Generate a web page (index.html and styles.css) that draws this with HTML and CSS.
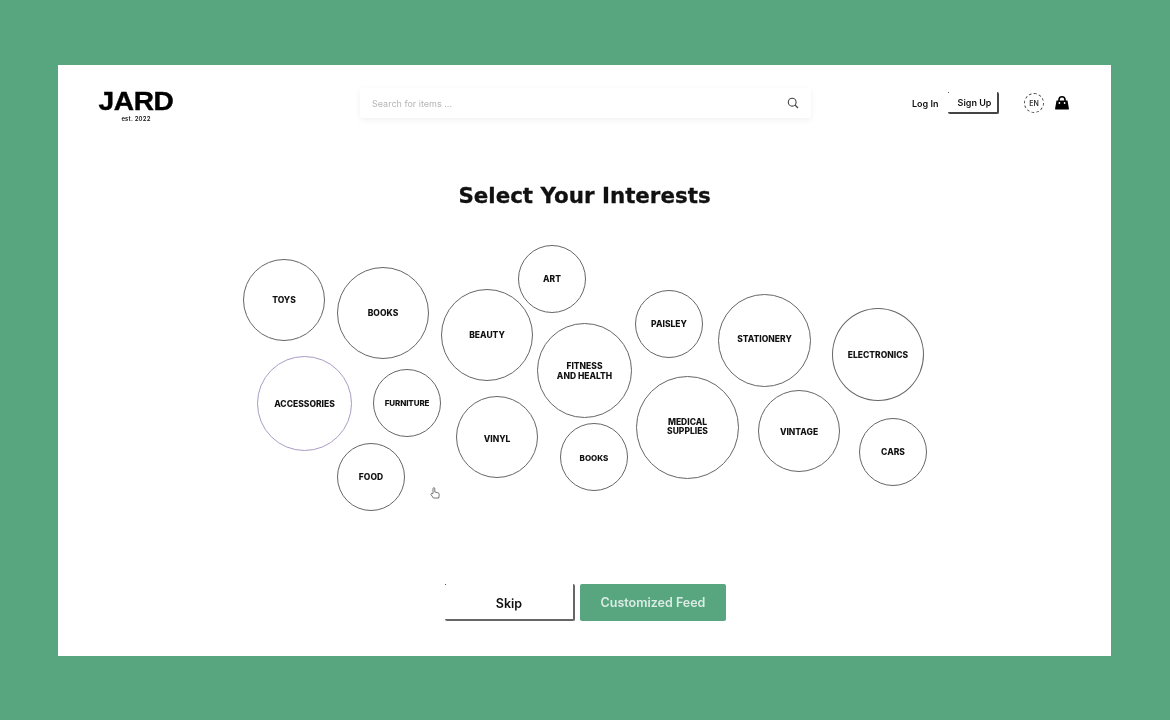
FILE: index.html
```html
<!DOCTYPE html>
<html lang="en">
<head>
<meta charset="utf-8">
<title>JARD - Select Your Interests</title>
<link rel="stylesheet" href="styles.css">
</head>
<body>
<main class="card">
  <header class="header">
    <div class="logo">
      <div class="logo-name">JARD</div>
      <div class="logo-est">est. 2022</div>
    </div>
    <div class="search">
      <span class="search-text">Search for items ...</span>
      <svg class="search-icon" viewBox="0 0 12 12" width="12" height="12"><circle cx="5.2" cy="5.2" r="3.9" fill="none" stroke="#444" stroke-width="1.1"/><path d="M8 8l3 3" stroke="#444" stroke-width="1.2" fill="none"/></svg>
    </div>
    <nav class="actions">
      <a class="login">Log In</a>
      <a class="signup">Sign Up</a>
      <span class="globe"><span class="globe-text">EN</span></span>
      <svg class="bag" viewBox="0 0 14 14" width="14" height="14"><path d="M4 6V3.8a3 3 0 0 1 6 0V6" fill="none" stroke="#000" stroke-width="1.6"/><path d="M1.5 4.6h11l1.3 7.4a1.2 1.2 0 0 1-1.2 1.6H1.4A1.2 1.2 0 0 1 .2 12z" fill="#000"/><circle cx="4.4" cy="7" r=".9" fill="#fff"/><circle cx="9.6" cy="7" r=".9" fill="#fff"/></svg>
    </nav>
  </header>

  <h1 class="title">Select Your Interests</h1>

  <section class="stage">
    <div class="bubble toys">TOYS</div>
    <div class="bubble books-a">BOOKS</div>
    <div class="bubble art">ART</div>
    <div class="bubble beauty">BEAUTY</div>
    <div class="bubble paisley">PAISLEY</div>
    <div class="bubble stationery">STATIONERY</div>
    <div class="bubble electronics">ELECTRONICS</div>
    <div class="bubble fitness">FITNESS<br>AND HEALTH</div>
    <div class="bubble accessories">ACCESSORIES</div>
    <div class="bubble furniture">FURNITURE</div>
    <div class="bubble vinyl">VINYL</div>
    <div class="bubble books-b">BOOKS</div>
    <div class="bubble medical">MEDICAL<br>SUPPLIES</div>
    <div class="bubble vintage">VINTAGE</div>
    <div class="bubble cars">CARS</div>
    <div class="bubble food">FOOD</div>
    <svg class="cursor" viewBox="0 0 10 12" width="10" height="12"><path d="M3 6.5V1.6a.9.9 0 0 1 1.8 0V5l3.4.9c.8.2 1.1.8 1 1.5L8.8 11H3.4L1 7.6c-.5-.8.5-1.6 1.2-1z" fill="#fff" stroke="#555" stroke-width=".8"/></svg>
  </section>

  <footer class="footer">
    <button class="btn btn-skip">Skip</button>
    <button class="btn btn-feed">Customized Feed</button>
  </footer>
</main>
</body>
</html>
```

FILE: styles.css
```css
* { box-sizing: border-box; }
html, body { margin: 0; height: 720px; overflow: hidden; }
body {
  background: #57a680;
  padding: 65px 59px 64px 58px;
  font-family: Inter, "Liberation Sans", sans-serif;
  color: #111;
}
.card {
  background: #fff;
  height: 591px;
  display: flex;
  flex-direction: column;
  filter: blur(0.6px);
}
.header {
  display: flex;
  align-items: flex-start;
  padding: 23px 42px 0 40px;
  height: 100px;
}
.logo { width: 76px; text-align: center; }
.logo-name {
  font-family: "Liberation Sans", Arial, sans-serif;
  font-weight: 700;
  font-size: 26px;
  line-height: 26px;
  letter-spacing: -0.4px;
  color: #000;
  -webkit-text-stroke: 0.4px #000;
  transform: scaleX(1.08);
}
.logo-est { font-size: 6px; line-height: 7px; margin-top: 1px; font-weight: 600; letter-spacing: 0.2px; }
.search {
  margin: 0 0 0 186px;
  width: 451px;
  height: 30px;
  display: flex;
  align-items: center;
  justify-content: space-between;
  padding: 0 12px;
  background: #fff;
  box-shadow: 0 2px 6px rgba(0,0,0,.06);
  border-radius: 2px;
}
.search-text { font-size: 9px; color: #b5b5b5; }
.actions {
  margin-left: auto;
  display: flex;
  align-items: center;
  height: 30px;
}
.login { font-size: 9px; font-weight: 600; width: 36px; }
.signup {
  position: relative;
  width: 51px;
  height: 22px;
  padding-left: 4px;
  font-size: 9px;
  font-weight: 600;
  display: flex;
  align-items: center;
  justify-content: center;
  border-right: 2px solid #444;
  border-bottom: 2px solid #444;
  border-radius: 2px;
}
.signup::before,
.btn-skip::before {
  content: "";
  position: absolute;
  left: 0;
  top: 0;
  width: 1px;
  height: 1px;
  background: #555;
}
.globe {
  margin-left: 25px;
  width: 20px;
  height: 20px;
  border: 1px dashed #444;
  border-radius: 50%;
  display: flex;
  align-items: center;
  justify-content: center;
}
.globe-text { font-size: 7px; font-weight: 600; color: #333; }
.bag { margin-left: 11px; }
.title {
  margin: 18px 0 0;
  text-align: center;
  font-family: "DejaVu Sans", sans-serif;
  font-weight: 700;
  font-size: 21.4px;
  line-height: 26px;
  color: #111;
  -webkit-text-stroke: 0.3px #111;
}
.stage { position: relative; flex: 1; margin-top: 10px; }
.bubble {
  position: absolute;
  display: flex;
  align-items: center;
  justify-content: center;
  text-align: center;
  border: 1px solid #666;
  border-radius: 50%;
  padding-top: 2px;
  font-size: 8.5px;
  line-height: 9.5px;
  font-weight: 800;
  color: #111;
  background: #fff;
}
/* Free canvas of bubbles: each place is measured from the stage corner */
.toys { left: 185px; top: 40px; width: 82px; height: 82px; }
.books-a { left: 279px; top: 48px; width: 92px; height: 92px; }
.art { left: 460px; top: 26px; width: 68px; height: 68px; }
.beauty { left: 383px; top: 70px; width: 92px; height: 92px; }
.paisley { left: 577px; top: 71px; width: 68px; height: 68px; }
.stationery { left: 660px; top: 75px; width: 93px; height: 93px; padding-bottom: 3px; }
.electronics { left: 774px; top: 89px; width: 92px; height: 93px; }
.fitness { left: 479px; top: 104px; width: 95px; height: 95px; }
.accessories { left: 199px; top: 137px; width: 95px; height: 95px; border-color: #a99cc4; }
.furniture { left: 315px; top: 150px; width: 68px; height: 68px; font-size: 8px; letter-spacing: -0.1px; }
.vinyl { left: 398px; top: 177px; width: 82px; height: 82px; padding-top: 5px; }
.books-b { left: 502px; top: 204px; width: 68px; height: 68px; font-size: 8px; padding-top: 4px; }
.medical { left: 578px; top: 157px; width: 103px; height: 103px; padding-bottom: 3px; }
.vintage { left: 700px; top: 171px; width: 82px; height: 82px; padding-top: 4px; }
.cars { left: 801px; top: 199px; width: 68px; height: 68px; }
.food { left: 279px; top: 224px; width: 68px; height: 68px; }
.cursor { position: absolute; left: 372px; top: 268px; }
.footer {
  display: flex;
  justify-content: center;
  gap: 5px;
  padding: 0 0 35px 2px;
}
.btn {
  height: 37px;
  border: 0;
  font-family: inherit;
  font-weight: 600;
  font-size: 12.5px;
  border-radius: 2px;
  padding: 0;
}
.btn-skip {
  position: relative;
  width: 130px;
  background: #fff;
  color: #111;
  padding-top: 3px;
  border-right: 2px solid #666;
  border-bottom: 2px solid #666;
}
.btn-feed { width: 146px; background: #57a680; color: #dcebe3; }
```
